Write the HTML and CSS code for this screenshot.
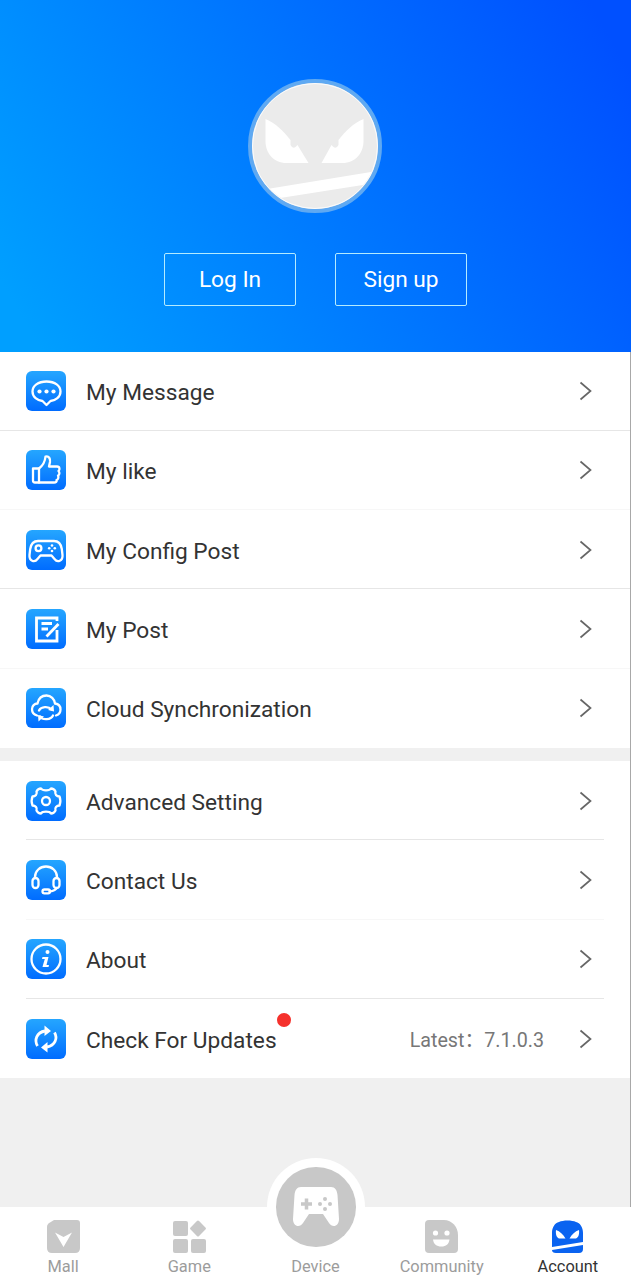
FILE: index.html
```html
<!DOCTYPE html>
<html lang="en">
<head>
<meta charset="utf-8">
<title>Account</title>
<link rel="stylesheet" href="styles.css">
</head>
<body>
<svg class="defs" width="0" height="0" aria-hidden="true">
  <symbol id="chev" viewBox="0 0 14 20"><path d="M2.500 1.500 L12.500 10 L2.500 18.500" fill="none" stroke="#666" stroke-width="1.700"/></symbol>
</svg>
<main class="app">
  <header class="hero">
    <div class="avatar">
      <svg viewBox="0 0 134 134" width="134" height="134">
        <defs><clipPath id="disc"><circle cx="67" cy="67" r="62"/></clipPath></defs>
        <circle cx="67" cy="67" r="65" fill="#ebebeb" stroke="#5fa9f2" stroke-width="4"/>
        <circle cx="67" cy="67" r="62.500" fill="none" stroke="#fff" stroke-width="0.800"/>
        <path d="M17.500 40 C27.500 44 35.500 52 42.500 61 L42.500 66 Q44.500 70 47.500 68 L49.500 66 L60.500 84 L38.500 84 C25.500 84 17.500 74 17.500 62 Z" fill="#fff"/>
        <path d="M115.500 40 C105.500 44 97.500 52 90.500 61 L90.500 66 Q88.500 70 85.500 68 L83.500 66 L73.500 84 L94.500 84 C107.500 84 115.500 74 115.500 62 Z" fill="#fff"/>
        <path d="M10 111.400 L134 91.200 L134 103 L10 122.600 Z" fill="#fff" clip-path="url(#disc)"/>
      </svg>
    </div>
    <div class="auth">
      <a class="auth-btn">Log In</a>
      <a class="auth-btn">Sign up</a>
    </div>
  </header>

  <section class="list">
    <div class="row line">
      <span class="tile"><svg viewBox="0 0 40 40"><path d="M20.500 10.500 C12 10.500 6.500 15 6.500 20.500 C6.500 26 11.500 29.500 16.500 30 L20.500 34 L24.500 30 C29.500 29.500 34.500 26 34.500 20.500 C34.500 15 29 10.500 20.500 10.500 Z" class="s"/><circle cx="13.500" cy="20.500" r="2.100" class="f"/><circle cx="20.500" cy="20.500" r="2.100" class="f"/><circle cx="27.500" cy="20.500" r="2.100" class="f"/></svg></span>
      <span class="label">My Message</span>
      <svg class="chev"><use href="#chev"/></svg>
    </div>
    <div class="row line-faint">
      <span class="tile"><svg viewBox="0 0 40 40"><path d="M7 18.500 H13 V32.500 H9 Q7 32.500 7 30.500 Z" class="s"/><path d="M13 18.500 C17 15.500 19 12 19.500 6.500 C23 5.500 24.500 9 24 12 L23 16.500 H31 C34 16.500 34 20 32.500 21 C34 22.500 33.500 25 32 25.500 C33 27.500 32 29.500 30.500 30 C31 31.500 30 32.500 28 32.500 H13" class="s"/></svg></span>
      <span class="label">My like</span>
      <svg class="chev"><use href="#chev"/></svg>
    </div>
    <div class="row line">
      <span class="tile"><svg viewBox="0 0 40 40"><path d="M12 11 H28 C32.500 11 35 14 35.800 19 L36.500 25 C37 31 31.500 33 28.500 29 L25.500 25.500 H14.500 L11.500 29 C8.500 33 3 31 3.500 25 L4.200 19 C5 14 7.500 11 12 11 Z" class="s"/><circle cx="12.500" cy="18.300" r="2.900" class="s"/><circle cx="26" cy="15.500" r="1.300" class="f"/><circle cx="26" cy="21" r="1.300" class="f"/><circle cx="23.200" cy="18.300" r="1.300" class="f"/><circle cx="28.800" cy="18.300" r="1.300" class="f"/></svg></span>
      <span class="label">My Config Post</span>
      <svg class="chev"><use href="#chev"/></svg>
    </div>
    <div class="row line-faint">
      <span class="tile"><svg viewBox="0 0 40 40"><path d="M31 21 V32 H10.500 V9 H31 V12" class="s t"/><path d="M15.500 14.500 H26 M15.500 20 H22" class="s t"/><path d="M20.500 27.500 L32.500 15" class="s t"/></svg></span>
      <span class="label">My Post</span>
      <svg class="chev"><use href="#chev"/></svg>
    </div>
    <div class="row">
      <span class="tile"><svg viewBox="0 0 40 40"><path d="M11 27.500 C7.500 26.500 6 24 6 21 C6 18 8.500 15.500 11.500 15.500 C12.500 10.500 16 7.500 20.500 7.500 C25 7.500 28.500 11 29 15.500 C32.500 16 34.500 18.500 34.500 21.500 C34.500 24.500 33 26.500 30 27.500" class="s"/><path d="M13 22.500 C15 18.500 22.500 18 25.500 21.500 M27 27.500 C25 32 16.500 32.500 14 28.500" class="s"/><path d="M27.500 17 L28 23.500 L22 22 Z M12.500 33.500 L12 27 L18 28.500 Z" class="f"/></svg></span>
      <span class="label">Cloud Synchronization</span>
      <svg class="chev"><use href="#chev"/></svg>
    </div>
  </section>

  <section class="list list-inset">
    <div class="row line">
      <span class="tile"><svg viewBox="0 0 40 40"><path d="M15 7.500 C16.500 10 23.500 10 25 7.500 C27 7.500 28.500 8.500 29.500 10.500 C28.500 13 30.500 15.500 33.500 15.500 C34.500 18 34.500 22 33.500 24.500 C30.500 24.500 28.500 27 29.500 29.500 C28.500 31.500 27 32.500 25 32.500 C23.500 30 16.500 30 15 32.500 C13 32.500 11.500 31.500 10.500 29.500 C11.500 27 9.500 24.500 6.500 24.500 C5.500 22 5.500 18 6.500 15.500 C9.500 15.500 11.500 13 10.500 10.500 C11.500 8.500 13 7.500 15 7.500 Z" class="s"/><circle cx="20" cy="20" r="4" class="s"/></svg></span>
      <span class="label">Advanced Setting</span>
      <svg class="chev"><use href="#chev"/></svg>
    </div>
    <div class="row line-faint">
      <span class="tile"><svg viewBox="0 0 40 40"><path d="M9 18 V17 C9 11 14 6.500 20 6.500 C26 6.500 31 11 31 17 V18" class="s"/><rect x="6.500" y="18" width="6" height="10" rx="3" class="s"/><rect x="27.500" y="18" width="6" height="10" rx="3" class="s"/><path d="M30.500 28 C30 30 27 31 23.500 31.500" class="s"/><rect x="16.500" y="29.500" width="7.500" height="3.800" rx="1.900" class="s"/></svg></span>
      <span class="label">Contact Us</span>
      <svg class="chev"><use href="#chev"/></svg>
    </div>
    <div class="row line">
      <span class="tile"><svg viewBox="0 0 40 40"><circle cx="20" cy="20" r="14.500" class="s"/><circle cx="21.500" cy="13" r="2" class="f"/><path d="M16.500 18 H22.500 L20.500 26 H23 L22.500 28 H16.500 L17 26 L18.800 20 H16 Z" class="f"/></svg></span>
      <span class="label">About</span>
      <svg class="chev"><use href="#chev"/></svg>
    </div>
    <div class="row">
      <span class="tile"><svg viewBox="0 0 40 40"><path d="M11.500 27 C8 21 10.500 13.500 19 12 M28.500 13.500 C32 19.500 29 26.500 21 28" class="s t"/><path d="M18.500 6.500 L25 12 L18.500 17 Z M21.500 23 L15 28.500 L21.500 33.500 Z" class="f"/></svg></span>
      <span class="label has-dot">Check For Updates<i class="dot"></i></span>
      <span class="version">Latest：7.1.0.3</span>
      <svg class="chev"><use href="#chev"/></svg>
    </div>
  </section>

  <div class="spacer"></div>

  <nav class="tabs">
    <a class="tab">
      <svg class="tab-icon" viewBox="0 0 33 33"><path d="M7 0 H30 Q33 0 33 3 V28 Q33 33 28 33 H5 Q0 33 0 28 V7 Q0 4 3 2.500 Z" fill="#c8c8c8"/><path d="M8 12.500 L16.500 17 L25 12.500 L16.500 27 Z" fill="#fff"/></svg>
      <span>Mall</span>
    </a>
    <a class="tab">
      <svg class="tab-icon" viewBox="0 0 33 33"><rect x="0" y="1" width="15" height="15" rx="2" fill="#c8c8c8"/><rect x="0" y="19" width="15" height="14" rx="2" fill="#c8c8c8"/><rect x="18" y="19" width="15" height="14" rx="2" fill="#c8c8c8"/><rect x="19" y="2.500" width="12" height="12" rx="1.500" fill="#c8c8c8" transform="rotate(45 25 8.500)"/></svg>
      <span>Game</span>
    </a>
    <a class="tab tab-device">
      <span class="device-wrap">
        <span class="device-disc">
          <svg viewBox="0 0 46 42" width="46" height="42"><path d="M8 1 H38 C42 1 44 4 44.500 9 L46 33 C46 41 39 42 36 37 L30 28 H16 L10 37 C7 42 0 41 0 33 L1.500 9 C2 4 4 1 8 1 Z" fill="#fff"/><path d="M8 18 H19 M13.500 12.500 V23.500" stroke="#c8c8c8" stroke-width="3.500"/><circle cx="32" cy="13" r="2" fill="#c8c8c8"/><circle cx="32" cy="23" r="2" fill="#c8c8c8"/><circle cx="27" cy="18" r="2" fill="#c8c8c8"/><circle cx="37" cy="18" r="2" fill="#c8c8c8"/></svg>
        </span>
      </span>
      <span>Device</span>
    </a>
    <a class="tab">
      <svg class="tab-icon" viewBox="0 0 33 33"><path d="M4 0 H19 C27 0 33 7 33 15 V29 Q33 33 29 33 H4 Q0 33 0 29 V4 Q0 0 4 0 Z" fill="#c8c8c8"/><circle cx="10.500" cy="13" r="2.600" fill="#fff"/><circle cx="22" cy="13" r="2.600" fill="#fff"/><path d="M8 19.500 H24.500 C24 24 21 26.500 16.300 26.500 C11.500 26.500 8.500 24 8 19.500 Z" fill="#fff"/></svg>
      <span>Community</span>
    </a>
    <a class="tab tab-active">
      <svg class="tab-icon" viewBox="0 0 33 33"><path d="M8 2 C12 0 21 0 25 2 C29 3 32 7 32 13 V22 L1 27 V13 C1 7 4 3 8 2 Z M1 30 L32 25 V29 Q32 33 28 33 H5 Q1 33 1 30 Z" fill="#0a63f0"/><path d="M5 10 C9 11.500 12 14 14.500 18.500 L8 18.500 C5.500 17.500 4.500 14 5 10 Z M28 10 C24 11.500 21 14 18.500 18.500 L25 18.500 C27.500 17.500 28.500 14 28 10 Z" fill="#fff"/></svg>
      <span>Account</span>
    </a>
  </nav>
</main>
</body>
</html>
```
FILE: styles.css
```css
* { box-sizing: border-box; }
html, body { margin: 0; padding: 0; }
body { width: 631px; height: 1280px; overflow: hidden; background: #fff; font-family: Roboto, "Noto Sans CJK SC", sans-serif; }
.defs { position: absolute; }

.app { position: relative; width: 631px; height: 1280px; display: flex; flex-direction: column; background: #f0f0f0; border-right: 1px solid #a8a8a8; }

.hero { height: 351.500px; flex: none; margin-right: -1px; padding-top: 79px; display: flex; flex-direction: column; align-items: center; gap: 40px; background: linear-gradient(60deg, #009fff 5%, #0050ff 95%); }
.avatar { width: 134px; height: 134px; margin-left: -1px; }
.avatar svg { display: block; }
.auth { display: flex; gap: 39.500px; }
.auth-btn { width: 131.500px; height: 53px; display: flex; align-items: center; justify-content: center; border: 1px solid #b4ebff; border-radius: 2px; color: #fff; font-size: 22.700px; }

.list { background: #fff; flex: none; }
.list-inset { margin-top: 13px; }
.row { height: 79.300px; display: flex; align-items: center; padding: 1px 38px 0 26px; color: #333; border-bottom: 1px solid transparent; }
.line { border-bottom-color: #e6e6e6; }
.line-faint { border-bottom-color: #f7f7f7; }
.list-inset .row { margin: 0 26px; padding-left: 0; padding-right: 12px; }
.tile { width: 40px; height: 40px; flex: none; border-radius: 6px; background: linear-gradient(#25a6ff, #006cff); }
.tile svg { display: block; width: 40px; height: 40px; }
.s { fill: none; stroke: #fff; stroke-width: 2.300; stroke-linejoin: round; stroke-linecap: round; }
.t { stroke-width: 2.800; stroke-linecap: butt; stroke-linejoin: miter; }
.f { fill: #fff; }
.label { margin-left: 20px; padding-top: 4px; font-size: 22.700px; line-height: 28px; flex: none; }
.has-dot { position: relative; }
.dot { position: absolute; left: 191px; top: -10px; width: 14px; height: 14px; border-radius: 50%; background: #f5312c; }
.version { margin-left: auto; margin-right: 34px; font-size: 19.700px; color: #777; white-space: nowrap; }
.chev { width: 14px; height: 20px; flex: none; margin-left: auto; }
.version + .chev { margin-left: 0; }

.spacer { flex: 1; }

.tabs { height: 73px; flex: none; display: grid; grid-template-columns: repeat(5, 1fr); background: #fff; margin-right: -1px; position: relative; }
.tab { display: flex; flex-direction: column; align-items: center; padding-top: 13px; font-size: 16.400px; line-height: 20px; color: #9c9c9c; }
.tab-icon { width: 33px; height: 33px; display: block; }
.tab span:last-child { margin-top: 4px; }
.tab-active { color: #333; }
.tab-device { padding-top: 50px; }
.device-wrap { position: absolute; left: 267px; top: -49px; width: 98px; height: 98px; border-radius: 50%; background: #fff; display: flex; align-items: center; justify-content: center; }
.device-disc { width: 79.500px; height: 79.500px; border-radius: 50%; background: #c8c8c8; display: flex; align-items: center; justify-content: center; }
.tab-device span:last-child { margin-top: 0; }
```
